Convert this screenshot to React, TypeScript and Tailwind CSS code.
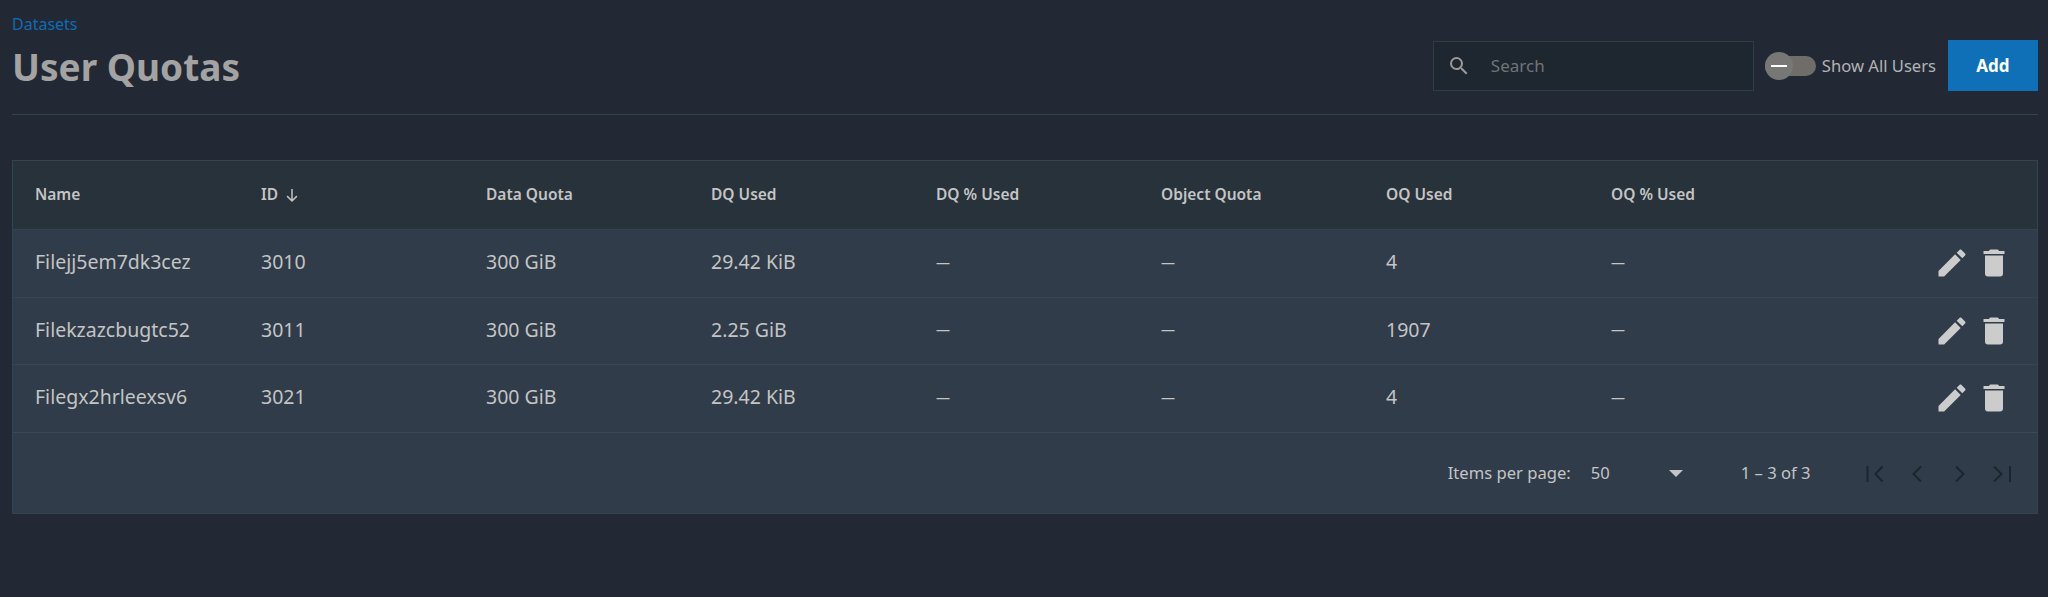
import React from "react";

const font = "font-['Noto_Sans','Liberation_Sans',sans-serif]";

const rows = [
  { name: "Filejj5em7dk3cez", id: "3010", dq: "300 GiB", used: "29.42 KiB", oq: "4" },
  { name: "Filekzazcbugtc52", id: "3011", dq: "300 GiB", used: "2.25 GiB", oq: "1907" },
  { name: "Filegx2hrleexsv6", id: "3021", dq: "300 GiB", used: "29.42 KiB", oq: "4" },
];

const columns = ["Name", "ID", "Data Quota", "DQ Used", "DQ % Used", "Object Quota", "OQ Used", "OQ % Used"];

const cell = "pb-[2px] text-[19.5px] text-[#c4c4c4]";
const dash = "pb-[2px] text-[14px] text-[#c4c4c4]";

const PencilIcon = () => (
  <svg viewBox="0 0 24 24" className="w-9 h-9 fill-[#cccccc]">
    <path d="M20.71,7.04C21.1,6.65 21.1,6 20.71,5.63L18.37,3.29C18,2.9 17.35,2.9 16.96,3.29L15.12,5.12L18.87,8.87M3,17.25V21H6.75L17.81,9.93L14.06,6.18L3,17.25Z" />
  </svg>
);

const TrashIcon = () => (
  <svg viewBox="0 0 24 24" className="w-9 h-9 fill-[#cccccc]">
    <path d="M19,4H15.5L14.5,3H9.5L8.5,4H5V6H19M6,19A2,2 0 0,0 8,21H16A2,2 0 0,0 18,19V7H6V19Z" />
  </svg>
);

const PageIcon = ({ d }: { d: string }) => (
  <svg viewBox="0 0 24 24" className="w-6 h-6 fill-none stroke-[#1b252e] stroke-2">
    <path d={d} />
  </svg>
);

export default function App() {
  return (
    <div className={`min-h-[597px] bg-[#222935] pl-3 pr-[10px] pt-[14px] ${font}`}>
      {/* page header */}
      <div className="flex justify-between items-start h-[101px] border-b border-[#33434f]">
        <div>
          <a className="block text-[16px] leading-5 text-[#0f6cb0]">Datasets</a>
          <h1 className="text-[37px] leading-[46px] font-bold text-[#a3a3a3] mt-[10px]">User Quotas</h1>
        </div>
        <div className="flex items-center mt-[26px]">
          <div className="flex items-center w-[321px] h-[50px] bg-[#1e2630] border border-[#2f3d49]">
            <svg viewBox="0 0 24 24" className="w-6 h-6 ml-[13px] fill-[#999999]">
              <path d="M15.5 14h-.79l-.28-.27A6.471 6.471 0 0 0 16 9.5 6.5 6.5 0 1 0 9.5 16c1.61 0 3.09-.59 4.23-1.57l.27.28v.79l5 4.99L20.49 19l-4.99-5zm-6 0C7.01 14 5 11.99 5 9.5S7.01 5 9.5 5 14 7.01 14 9.5 11.99 14 9.5 14z" />
            </svg>
            <span className="ml-5 text-[17px] text-[#6f7478]">Search</span>
          </div>
          <div className="relative ml-[11px] w-[51px] h-5 rounded-full bg-[#6f6d6a]">
            <div className="absolute left-0 top-[-4px] w-7 h-7 rounded-full bg-[#777776] flex items-center justify-center">
              <div className="w-4 h-[2px] bg-white" />
            </div>
          </div>
          <span className="ml-[6px] mt-[2px] text-[16.6px] text-[#b3b3b3]">Show All Users</span>
          <button className="ml-3 w-[90px] h-[51px] bg-[#0f6fb7] text-white font-bold text-[17px]">Add</button>
        </div>
      </div>

      {/* table card */}
      <div className="mt-[45px] bg-[#303c49] border border-[#33434f]">
        <table className="w-full table-fixed border-collapse">
          <thead>
            <tr className="h-[68px] bg-[#28323b] border-b border-[#33434f]">
              {columns.map((c, i) => (
                <th
                  key={c}
                  className={`text-left font-semibold text-[15.5px] text-[#c4c4c4] ${i === 0 ? "pl-[22px] w-[248px]" : "w-[225px]"}`}
                >
                  <span className="flex items-center">
                    {c}
                    {c === "ID" && (
                      <svg viewBox="0 0 24 24" className="w-[18px] h-[18px] ml-[5px] fill-none stroke-[#c4c4c4] stroke-2">
                        <path d="M12 4v16M5.5 13.5 12 20l6.5-6.5" />
                      </svg>
                    )}
                  </span>
                </th>
              ))}
              <th />
            </tr>
          </thead>
          <tbody>
            {rows.map((r, idx) => (
              <tr key={r.id} className={`border-b ${idx === 1 ? "h-[67px]" : "h-[68px]"} ${idx === 2 ? "border-[#38495a]" : "border-[#364552]"}`}>
                <td className={`pl-[22px] ${cell}`}>{r.name}</td>
                <td className={cell}>{r.id}</td>
                <td className={cell}>{r.dq}</td>
                <td className={cell}>{r.used}</td>
                <td className={dash}>—</td>
                <td className={dash}>—</td>
                <td className={cell}>{r.oq}</td>
                <td className={dash}>—</td>
                <td>
                  <div className="flex justify-end gap-[6px] pr-[25px]">
                    <PencilIcon />
                    <TrashIcon />
                  </div>
                </td>
              </tr>
            ))}
          </tbody>
        </table>

        {/* paginator */}
        <div className="flex items-center justify-end h-[80px] pt-[2px] pr-[23px] text-[16.6px] text-[#c4c4c4]">
          <span>Items per page:</span>
          <span className="ml-5 w-[78px]">50</span>
          <div className="w-0 h-0 border-x-[7px] border-x-transparent border-t-[7px] border-t-[#c4c4c4]" />
          <span className="ml-[58px]">1 – 3 of 3</span>
          <div className="flex ml-[52px] gap-[18.5px]">
            <PageIcon d="M4.5 4v16M19.5 4.5 12.5 12l7 7.5" />
            <PageIcon d="M16 4.5 8.5 12l7.5 7.5" />
            <PageIcon d="M8 4.5 15.5 12 8 19.5" />
            <PageIcon d="M4 4.5 11.5 12 4 19.5M20 4v16" />
          </div>
        </div>
      </div>
    </div>
  );
}
